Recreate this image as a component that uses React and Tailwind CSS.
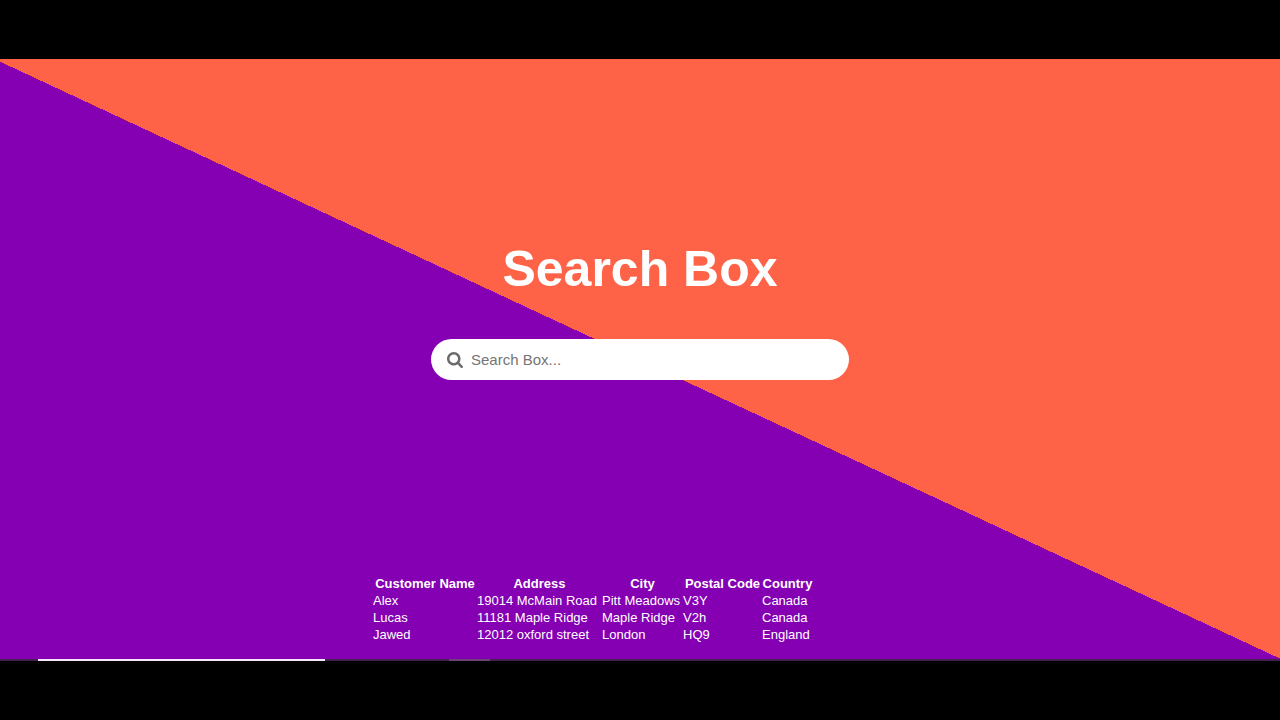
import React, { useState } from "react";

const customers = [
  { name: "Alex", address: "19014 McMain Road", city: "Pitt Meadows", postal: "V3Y", country: "Canada" },
  { name: "Lucas", address: "11181 Maple Ridge", city: "Maple Ridge", postal: "V2h", country: "Canada" },
  { name: "Jawed", address: "12012 oxford street", city: "London", postal: "HQ9", country: "England" },
];

const SearchIcon = () => (
  <svg className="h-4 w-4 shrink-0" viewBox="0 0 1664 1664" fill="currentColor" aria-hidden="true">
    <path d="M1152 704q0-185-131.500-316.500T704 256 387.500 387.500 256 704t131.500 316.500T704 1152t316.500-131.500T1152 704zm512 832q0 52-38 90t-90 38q-54 0-90-38l-343-342q-179 124-399 124-143 0-273.500-55.500t-225-150-150-225T0 704t55.500-273.500 150-225 225-150T704 0t273.500 55.500 225 150 150 225T1408 704q0 220-124 399l343 343q37 37 37 90z" />
  </svg>
);

const App = () => {
  const [query, setQuery] = useState("");

  const rows = customers.filter((c) =>
    Object.values(c).join(" ").toLowerCase().includes(query.toLowerCase())
  );

  return (
    <div className="flex min-h-screen flex-col bg-black font-['Liberation_Sans',Arial,sans-serif] text-white">
      <main className="mt-[59px] flex flex-1 flex-col items-center bg-[linear-gradient(25deg,#8400b2_calc(50%_-_1px),#ff6347_calc(50%_-_1px))]">
        <h1 className="mt-[180px] text-[50px] leading-[60px] font-bold">Search Box</h1>

        {/* Search field */}
        <label className="mt-10 flex h-[41px] w-[418px] max-w-full items-center gap-2 rounded-full bg-white px-4 text-[#6b6b6b]">
          <SearchIcon />
          <input
            type="text"
            aria-label="Search Box"
            placeholder="Search Box..."
            value={query}
            onChange={(e) => setQuery(e.target.value)}
            className="min-w-0 flex-1 bg-transparent text-[15px] leading-5 outline-none placeholder:text-[#757575]"
          />
        </label>

        {/* Customers */}
        <table className="mt-auto mr-[94px] mb-4 text-left text-[13px] leading-[17px] whitespace-nowrap">
          <thead>
            <tr className="text-center">
              <th className="min-w-[104px]">Customer Name</th>
              <th className="min-w-[125px]">Address</th>
              <th className="min-w-[81px]">City</th>
              <th className="min-w-[79px]">Postal Code</th>
              <th className="min-w-[51px]">Country</th>
            </tr>
          </thead>
          <tbody>
            {rows.map((c) => (
              <tr key={c.name}>
                <td>{c.name}</td>
                <td>{c.address}</td>
                <td>{c.city}</td>
                <td>{c.postal}</td>
                <td>{c.country}</td>
              </tr>
            ))}
          </tbody>
        </table>
      </main>

      {/* Bottom edge strip */}
      <div className="mb-[59px] flex h-[2px] bg-[#43204f]">
        <div className="ml-[38px] w-[287px] bg-[#f3e6f8]" />
        <div className="ml-[124px] w-[41px] bg-[#6a4275]" />
      </div>
    </div>
  );
};

export default App;
